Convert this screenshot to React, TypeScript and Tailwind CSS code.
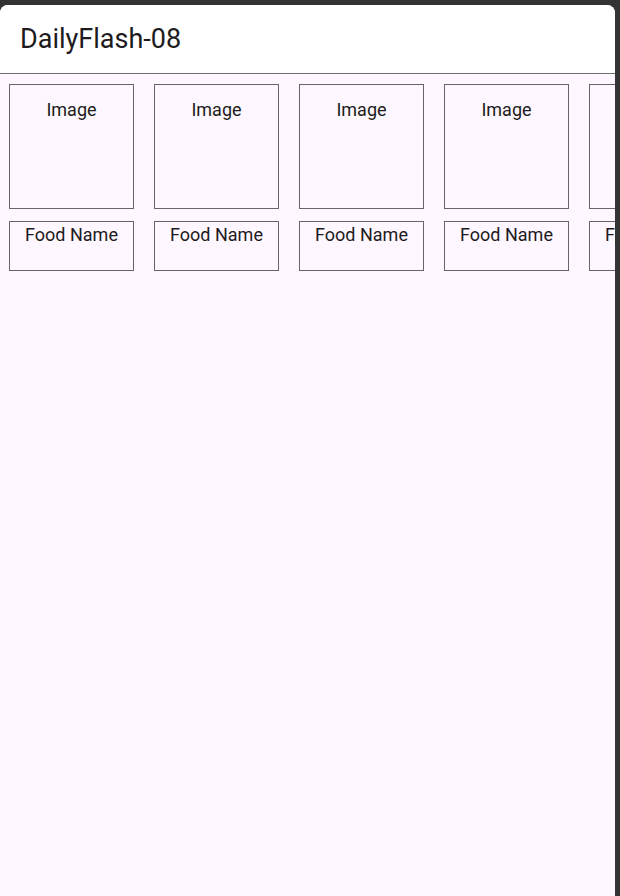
const items = [1, 2, 3, 4, 5]

function App() {
  return (
    <div className="w-[620px] h-[896px] bg-[#333333] pt-[5px] pr-[5px] overflow-hidden" style={{ fontFamily: 'Roboto, "Liberation Sans", sans-serif' }}>
      <div className="h-[900px] bg-[#fef7ff] rounded-t-[8px] overflow-hidden text-[#1d1b20]">
        <div className="h-[69px] bg-white border-b border-[#6f6f6f] flex items-center px-5">
          <h1 className="text-[27px] leading-none">DailyFlash-08</h1>
        </div>
        <div className="flex gap-5 pl-[9px] pt-[10px] overflow-hidden">
          {items.map((i) => (
            <div key={i} className="flex flex-col gap-3 shrink-0">
              <div className="w-[125px] h-[125px] border border-[#666666] flex justify-center pt-[16px]">
                <span className="text-[18px] leading-none">Image</span>
              </div>
              <div className="w-[125px] h-[50px] border border-[#666666] flex justify-center pt-[4px]">
                <span className="text-[18px] leading-none">Food Name</span>
              </div>
            </div>
          ))}
        </div>
      </div>
    </div>
  )
}

export default App
